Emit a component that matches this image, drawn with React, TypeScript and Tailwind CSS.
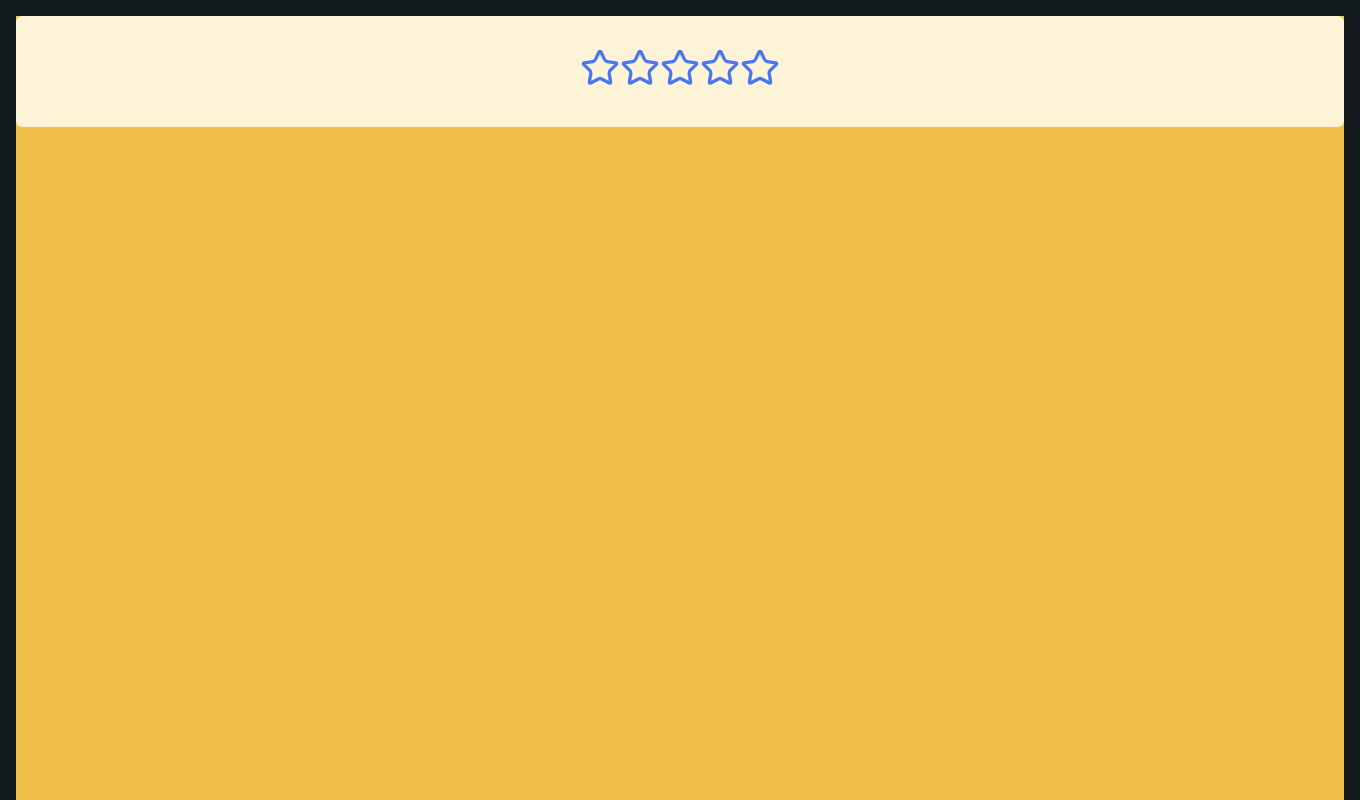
import { Star } from "lucide-react";

export default function App() {
  return (
    <div className="min-h-screen bg-[#131a1e] p-4 pb-0">
      <div className="h-[784px] bg-[#f0c04b]">
        <div className="flex justify-center rounded-md bg-[#fdf3d7] pt-8 pb-[39px]">
          {[0, 1, 2, 3, 4].map((i) => (
            <Star key={i} size={40} strokeWidth={2} className="text-[#4a76f0]" />
          ))}
        </div>
      </div>
    </div>
  );
}
